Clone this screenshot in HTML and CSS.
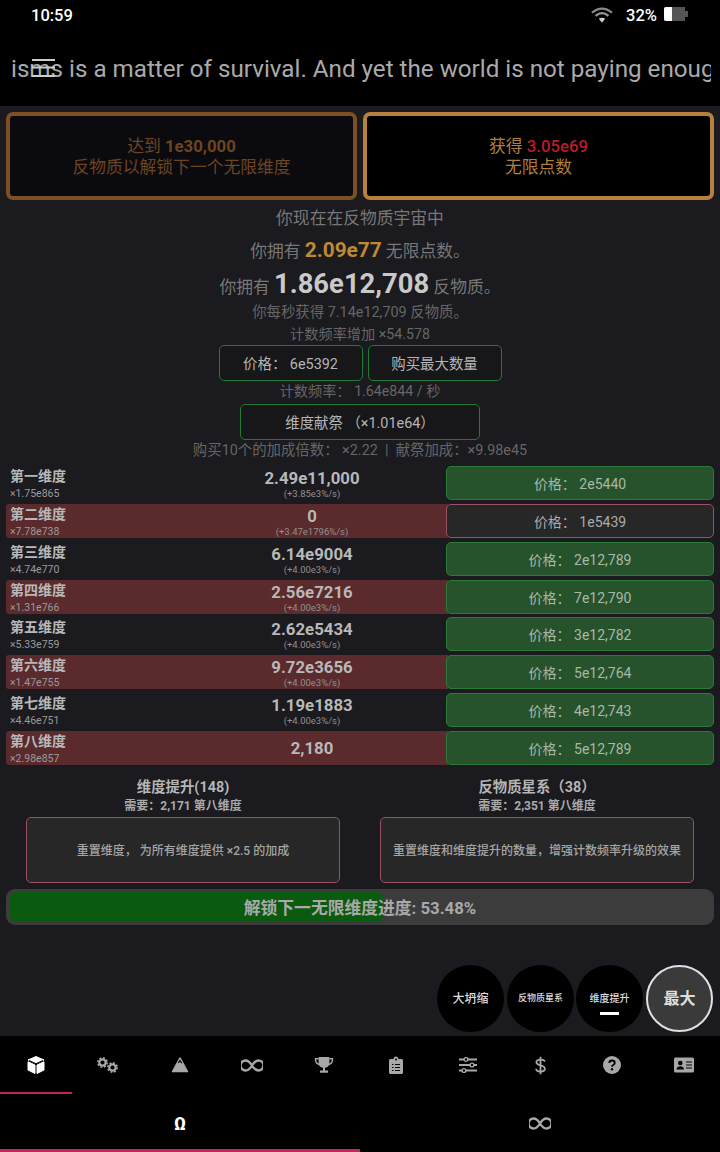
FILE: index.html
```html
<!DOCTYPE html>
<html lang="zh">
<head>
<meta charset="utf-8">
<title>Antimatter Dimensions</title>
<link rel="stylesheet" href="styles.css">
</head>
<body>
<div class="app">
  <div class="status">
    <span class="time">10:59</span>
    <div class="status-right">
      <svg class="wifi" viewBox="0 0 24 18" width="22" height="17"><path d="M1 6 Q12 -3 23 6" fill="none" stroke="#8a8a8a" stroke-width="2.400"/><path d="M5 9.500 Q12 3.500 19 9.500" fill="none" stroke="#999" stroke-width="2.400"/><path d="M8.500 12.500 L12 17 L15.500 12.500 Q12 10.500 8.500 12.500Z" fill="#ccc"/></svg>
      <span class="pct">32%</span>
      <span class="battery"><span class="battery-fill"></span></span>
    </div>
  </div>
  <header class="header">
    <div class="news">isms is a matter of survival. And yet the world is not paying enough attention</div>
    <svg class="burger" viewBox="0 0 23 20" width="23" height="20"><path d="M0 2H23M0 9.500H23M0 18H23" stroke="#ccc" stroke-width="2"/></svg>
  </header>
  <main class="main">
    <div class="prestige">
      <div class="pbtn pbtn-off">达到 <b>1e30,000</b><br>反物质以解锁下一个无限维度</div>
      <div class="pbtn pbtn-on">获得 <b class="red">3.05e69</b><br>无限点数</div>
    </div>
    <p class="l1">你现在在反物质宇宙中</p>
    <p class="l2">你拥有 <b class="orange">2.09e77</b> 无限点数。</p>
    <p class="l3">你拥有 <b class="big">1.86e12,708</b> 反物质。</p>
    <p class="l4">你每秒获得 7.14e12,709 反物质。</p>
    <p class="l5">计数频率增加 ×54.578</p>
    <div class="tick-row">
      <div class="gbtn w-price">价格： 6e5392</div>
      <div class="gbtn w-max">购买最大数量</div>
    </div>
    <p class="l6">计数频率： 1.64e844 / 秒</p>
    <div class="tick-row sac-row"><div class="gbtn w-sac">维度献祭 （×1.01e64）</div></div>
    <p class="l7">购买10个的加成倍数： ×2.22 &nbsp;|&nbsp; 献祭加成：×9.98e45</p>

    <div class="dims">
      <div class="dim">
        <div class="dname"><b>第一维度</b><small>×1.75e865</small></div>
        <div class="damt"><b>2.49e11,000</b><small>(+3.85e3%/s)</small></div>
        <div class="buy">价格： 2e5440</div>
      </div>
      <div class="dim alt">
        <div class="dname"><b>第二维度</b><small>×7.78e738</small></div>
        <div class="damt"><b>0</b><small>(+3.47e1796%/s)</small></div>
        <div class="buy off">价格： 1e5439</div>
      </div>
      <div class="dim">
        <div class="dname"><b>第三维度</b><small>×4.74e770</small></div>
        <div class="damt"><b>6.14e9004</b><small>(+4.00e3%/s)</small></div>
        <div class="buy">价格： 2e12,789</div>
      </div>
      <div class="dim alt">
        <div class="dname"><b>第四维度</b><small>×1.31e766</small></div>
        <div class="damt"><b>2.56e7216</b><small>(+4.00e3%/s)</small></div>
        <div class="buy">价格： 7e12,790</div>
      </div>
      <div class="dim">
        <div class="dname"><b>第五维度</b><small>×5.33e759</small></div>
        <div class="damt"><b>2.62e5434</b><small>(+4.00e3%/s)</small></div>
        <div class="buy">价格： 3e12,782</div>
      </div>
      <div class="dim alt">
        <div class="dname"><b>第六维度</b><small>×1.47e755</small></div>
        <div class="damt"><b>9.72e3656</b><small>(+4.00e3%/s)</small></div>
        <div class="buy">价格： 5e12,764</div>
      </div>
      <div class="dim">
        <div class="dname"><b>第七维度</b><small>×4.46e751</small></div>
        <div class="damt"><b>1.19e1883</b><small>(+4.00e3%/s)</small></div>
        <div class="buy">价格： 4e12,743</div>
      </div>
      <div class="dim alt">
        <div class="dname"><b>第八维度</b><small>×2.98e857</small></div>
        <div class="damt single"><b>2,180</b></div>
        <div class="buy">价格： 5e12,789</div>
      </div>
    </div>

    <div class="resets">
      <div class="reset">
        <h3>维度提升(148)</h3>
        <h4>需要：2,171 第八维度</h4>
        <div class="rbtn">重置维度， 为所有维度提供 ×2.5 的加成</div>
      </div>
      <div class="reset">
        <h3>反物质星系（38）</h3>
        <h4>需要：2,351 第八维度</h4>
        <div class="rbtn">重置维度和维度提升的数量，增强计数频率升级的效果</div>
      </div>
    </div>

    <div class="progress">
      <div class="progress-fill"></div>
      <span class="progress-text">解锁下一无限维度进度: 53.48%</span>
    </div>

    <div class="fabs">
      <div class="fab f13">大坍缩</div>
      <div class="fab f9">反物质星系</div>
      <div class="fab f10 marked">维度提升</div>
      <div class="fab fab-max">最大</div>
    </div>
  </main>
  <nav class="tabs">
    <div class="tab active"><svg viewBox="0 0 20 20" width="20" height="20"><path d="M10 1.500 L18 5 L10 8.500 L2 5Z M2 6.800 L9 10 V18.500 L2 15Z M18 6.800 L11 10 V18.500 L18 15Z" fill="#fff" stroke="#fff" stroke-width="1" stroke-linejoin="round"/><path d="M3 5.500 L10 8.700 L17 5.500" fill="none" stroke="#000" stroke-width="1"/></svg></div>
    <div class="tab"><svg viewBox="0 0 22 16" width="22" height="16"><circle cx="5.500" cy="5.500" r="3.200" fill="none" stroke="#a8a8a8" stroke-width="2.200"/><circle cx="5.500" cy="5.500" r="4.700" fill="none" stroke="#a8a8a8" stroke-width="1.600" stroke-dasharray="1.900 1.790"/><circle cx="15.500" cy="10.500" r="3.200" fill="none" stroke="#a8a8a8" stroke-width="2.200"/><circle cx="15.500" cy="10.500" r="4.700" fill="none" stroke="#a8a8a8" stroke-width="1.600" stroke-dasharray="1.900 1.790"/></svg></div>
    <div class="tab"><svg viewBox="0 0 20 18" width="18" height="16"><path d="M10 1 L18.500 16.500 H1.500Z" fill="#a8a8a8" stroke="#a8a8a8" stroke-width="1.500" stroke-linejoin="round"/><path d="M8 6.500 L10 4 L12 7" fill="none" stroke="#000" stroke-width="1.300"/></svg></div>
    <div class="tab"><svg viewBox="0 0 24 14" width="22" height="13"><path d="M12 7 C9 2 6.500 1.500 5 1.500 A5.500 5.500 0 0 0 5 12.500 C6.500 12.500 9 12 12 7 C15 2 17.500 1.500 19 1.500 A5.500 5.500 0 0 1 19 12.500 C17.500 12.500 15 12 12 7Z" fill="none" stroke="#a8a8a8" stroke-width="2.600"/></svg></div>
    <div class="tab"><svg viewBox="0 0 22 20" width="20" height="18"><path d="M5 1H17V8C17 11.500 14 13 11 13C8 13 5 11.500 5 8Z M9.800 12H12.200V16H15.500V18.500H6.500V16H9.800Z" fill="#a8a8a8"/><path d="M5 3H1.500C1.500 7 3 9 6 9.500M17 3H20.500C20.500 7 19 9 16 9.500" fill="none" stroke="#a8a8a8" stroke-width="1.600"/></svg></div>
    <div class="tab"><svg viewBox="0 0 14 18" width="14" height="18"><path d="M1.500 3H4.500A2.500 2.500 0 0 1 9.500 3H12.500A1.500 1.500 0 0 1 14 4.500V16.500A1.500 1.500 0 0 1 12.500 18H1.500A1.500 1.500 0 0 1 0 16.500V4.500A1.500 1.500 0 0 1 1.500 3Z" fill="#a8a8a8"/><path d="M3 8.500H4.500M6 8.500H11M3 11.500H4.500M6 11.500H11M3 14.500H4.500M6 14.500H11" stroke="#000" stroke-width="1.200"/><circle cx="7" cy="3.500" r="1" fill="#000"/></svg></div>
    <div class="tab"><svg viewBox="0 0 18 16" width="18" height="16"><path d="M0 2.500H18M0 8H18M0 13.500H18" stroke="#a8a8a8" stroke-width="1.800"/><circle cx="7" cy="2.500" r="1.900" fill="#000" stroke="#a8a8a8" stroke-width="1.400"/><circle cx="13" cy="8" r="1.900" fill="#000" stroke="#a8a8a8" stroke-width="1.400"/><circle cx="5" cy="13.500" r="1.900" fill="#000" stroke="#a8a8a8" stroke-width="1.400"/></svg></div>
    <div class="tab"><svg viewBox="0 0 12 20" width="11" height="19"><path d="M10.500 6C10.500 4 8.500 3.500 6 3.500C3.500 3.500 1.500 4.500 1.500 6.500C1.500 11 10.800 8.500 10.800 13.500C10.800 15.500 8.500 16.500 6 16.500C3.500 16.500 1.300 15.800 1.200 13.500M6 .5V19.500" fill="none" stroke="#a8a8a8" stroke-width="2"/></svg></div>
    <div class="tab"><svg viewBox="0 0 18 18" width="18" height="18"><circle cx="9" cy="9" r="9" fill="#a8a8a8"/><path d="M6.300 7C6.300 5.400 7.500 4.500 9 4.500C10.600 4.500 11.800 5.400 11.800 6.900C11.800 8.900 9 8.800 9 10.800" fill="none" stroke="#000" stroke-width="1.800"/><circle cx="9" cy="13.300" r="1.200" fill="#000"/></svg></div>
    <div class="tab"><svg viewBox="0 0 20 16" width="20" height="16"><rect width="20" height="15" y="0.500" rx="1.500" fill="#a8a8a8"/><circle cx="6.300" cy="6" r="2.300" fill="#000"/><path d="M2.500 12.500C2.500 10 4.500 9.200 6.300 9.200C8.100 9.200 10 10 10 12.500Z" fill="#000"/><path d="M12 5H18M12 8H18M12 11H18" stroke="#000" stroke-width="1.200"/></svg></div>
  </nav>
  <nav class="subtabs">
    <div class="subtab active">Ω</div>
    <div class="subtab"><svg viewBox="0 0 24 14" width="22" height="13"><path d="M12 7 C9 2 6.500 1.500 5 1.500 A5.500 5.500 0 0 0 5 12.500 C6.500 12.500 9 12 12 7 C15 2 17.500 1.500 19 1.500 A5.500 5.500 0 0 1 19 12.500 C17.500 12.500 15 12 12 7Z" fill="none" stroke="#a8a8a8" stroke-width="2.600"/></svg></div>
  </nav>
</div>
</body>
</html>
```

FILE: styles.css
```css
* { box-sizing: border-box; }
html, body { margin: 0; padding: 0; background: #000; }
body { font-family: Roboto, "Noto Sans CJK SC", sans-serif; color: #ccc; }
.app { width: 720px; height: 1152px; display: flex; flex-direction: column; overflow: hidden; }
.status { height: 30px; background: #000; display: flex; justify-content: space-between; align-items: center; padding: 0 32px 0 31px; color: #fff; font-size: 16.500px; font-weight: 500; }
.status-right { display: flex; align-items: center; gap: 6px; }
.wifi { margin-right: 7px; }
.pct { margin-right: 1px; }
.battery { width: 21px; height: 14px; background: #555; border-radius: 2px 0 0 2px; display: block; position: relative; margin: -2px 3px 0 0; }
.battery::after { content: ""; position: absolute; left: 21px; top: 4px; width: 3px; height: 6px; background: #555; }
.battery-fill { display: block; width: 8px; height: 14px; background: #fff; border-radius: 2px 0 0 2px; }
.header { height: 76px; background: #000; position: relative; display: flex; align-items: center; padding: 0 9px 0 11px; }
.news { flex: 1; white-space: nowrap; overflow: hidden; font-size: 24.200px; color: #aaa; margin-top: 1px; }
.burger { position: absolute; left: 32px; top: 28px; }
.main { flex: 1; min-height: 0; background: #1a1a1f; position: relative; padding-top: 6px; }
.prestige { display: flex; gap: 6px; padding: 0 6px; }
.pbtn { flex: 1; height: 88px; border-radius: 7px; text-align: center; display: block; padding-top: 20px; font-size: 16.800px; line-height: 21px; background: #0b0b0f; }
.pbtn-off { border: 4px solid #7d4f24; color: #6d4520; }
.pbtn-on { border: 4px solid #b5813c; background: #000; color: #b07f3c; }
.pbtn b { font-weight: 700; }
.pbtn-on .red { color: #b91c2c; font-weight: 500; }
.main p { margin: 0; text-align: center; color: #777; white-space: nowrap; }
.main .l1 { font-size: 16.800px; line-height: 22px; height: 22px; margin-top: 7px; }
.main .l2 { font-size: 16.800px; line-height: 28px; height: 28px; margin-top: 7px; }
.orange { color: #c08a32; font-size: 20.800px; font-weight: 700; }
.main .l3 { font-size: 16.800px; line-height: 34px; height: 34px; margin-top: 3px; }
.big { color: #c9c9c9; font-size: 27.400px; font-weight: 700; }
.main .l4 { font-size: 14.400px; line-height: 20px; height: 20px; margin-top: 2px; color: #666; }
.main .l5 { font-size: 14.200px; line-height: 18px; height: 18px; margin-top: 2px; color: #666; }
.tick-row { display: flex; justify-content: center; gap: 5px; margin-top: 2px; }
.gbtn { height: 36px; border: 1px solid #227a38; border-radius: 5px; background: #17171a; color: #b5b5b5; font-size: 14.400px; display: flex; align-items: center; justify-content: center; padding-bottom: 1px; }
.w-price { width: 144px; }
.w-max { width: 134px; }
.main .l6 { font-size: 14.200px; line-height: 18px; height: 18px; margin-top: 1px; color: #666; }
.sac-row { margin-top: 4px; }
.w-sac { width: 240px; }
.main .l7 { font-size: 14.400px; line-height: 18px; height: 18px; margin-top: 2px; color: #666; }
.dims { display: flex; flex-direction: column; gap: 3.850px; padding: 0 6px; margin-top: 6px; }
.dim { height: 34px; display: grid; grid-template-columns: 440px 1fr; position: relative; border-radius: 3px; }
.dim.alt { background: linear-gradient(90deg, #5a2a2d, #5a2a2d 442px, transparent 442px); }
.dname { position: absolute; left: 4px; top: 2px; display: flex; flex-direction: column; }
.dname b { font-size: 14px; line-height: 17px; color: #b8b8b8; font-weight: 700; }
.dname small { font-size: 10.500px; line-height: 12px; color: #9a9a9a; margin-top: 3px; }
.damt { grid-column: 1; display: flex; flex-direction: column; align-items: center; padding-left: 172px; text-align: center; }
.damt b { font-size: 16.800px; line-height: 20px; color: #b8b8b8; font-weight: 700; margin-top: 2px; }
.damt small { font-size: 9.500px; line-height: 12px; color: #909090; margin-top: 0; }
.damt.single b { line-height: 34px; margin-top: 0; }
.buy { grid-column: 2; height: 34px; border: 1px solid #2b7a3a; border-radius: 5px; background: #27532c; color: #a8b8a8; font-size: 14px; display: flex; align-items: center; justify-content: center; }
.buy.off { background: #272727; border-color: #9a5066; color: #ababab; }
.resets { display: grid; grid-template-columns: 1fr 1fr; padding: 0 26px; column-gap: 40px; margin-top: 14px; }
.reset { text-align: center; }
.reset h3 { margin: 0; font-size: 14.400px; line-height: 18px; font-weight: 700; color: #b5b5b5; }
.reset h4 { margin: 2px 0 0; font-size: 12px; line-height: 15px; font-weight: 700; color: #aaa; }
.rbtn { margin-top: 3px; height: 66px; border: 1px solid #9a5066; border-radius: 5px; background: #272727; color: #a5a5a5; font-size: 12px; font-weight: 500; display: flex; align-items: center; justify-content: center; }
.progress { position: relative; margin: 6px 6px 0; height: 36px; border-radius: 9px; background: #3c3c3c; overflow: hidden; display: flex; align-items: center; justify-content: center; }
.progress-fill { position: absolute; left: 4px; top: 3px; bottom: 3px; width: 373px; background: #0a5a10; border-radius: 6px; }
.progress-text { position: relative; font-size: 16.800px; font-weight: 700; color: #a9a9a9; }
.fabs { position: absolute; right: 7px; bottom: 4px; display: flex; align-items: center; gap: 2px; }
.fab { width: 67px; height: 67px; border-radius: 50%; background: #000; color: #ddd; display: flex; align-items: center; justify-content: center; position: relative; padding-bottom: 2px; }
.f13 { font-size: 12px; font-weight: 500; margin-right: 1px; }
.f9 { font-size: 9px; font-weight: 500; }
.f10 { font-size: 10px; font-weight: 500; }
.marked::after { content: ""; position: absolute; left: 24px; bottom: 17px; width: 19px; height: 3px; background: #fff; }
.fab-max { background: #3a3a3a; border: 2px solid #e0e0e0; font-size: 16px; font-weight: 700; margin-left: 1px; padding-bottom: 3px; }
.tabs { height: 58px; background: #000; display: flex; }
.tab { flex: 1; display: flex; align-items: center; justify-content: center; border-bottom: 2px solid transparent; padding-top: 2px; }
.tab.active { border-bottom: 2px solid #c2255c; }
.subtabs { height: 58px; background: #000; display: flex; }
.subtab { flex: 1; display: flex; align-items: center; justify-content: center; color: #a8a8a8; font-size: 18px; font-weight: 700; border-bottom: 3px solid transparent; padding-top: 3px; }
.subtab.active { color: #fff; border-bottom-color: #c2255c; }
```
